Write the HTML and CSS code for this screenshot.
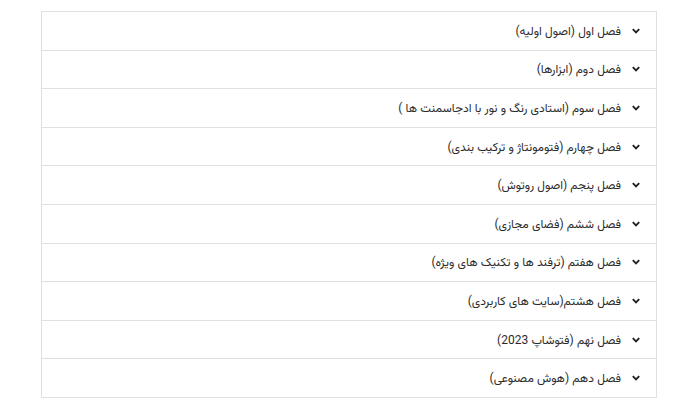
FILE: index.html
```html
<!DOCTYPE html>
<html lang="fa" dir="rtl">
<head>
<meta charset="utf-8">
<link rel="stylesheet" href="styles.css">
</head>
<body>
<ul class="chapters">
  <li class="chapter"><svg class="chev" viewBox="0 0 10 7"><path d="M1 1.2 L5 5.2 L9 1.2" /></svg><span>فصل اول (اصول اولیه)</span></li>
  <li class="chapter"><svg class="chev" viewBox="0 0 10 7"><path d="M1 1.2 L5 5.2 L9 1.2" /></svg><span>فصل دوم (ابزارها)</span></li>
  <li class="chapter"><svg class="chev" viewBox="0 0 10 7"><path d="M1 1.2 L5 5.2 L9 1.2" /></svg><span>فصل سوم (استادی رنگ و نور با ادجاسمنت ها )</span></li>
  <li class="chapter"><svg class="chev" viewBox="0 0 10 7"><path d="M1 1.2 L5 5.2 L9 1.2" /></svg><span>فصل چهارم (فتومونتاژ و ترکیب بندی)</span></li>
  <li class="chapter"><svg class="chev" viewBox="0 0 10 7"><path d="M1 1.2 L5 5.2 L9 1.2" /></svg><span>فصل پنجم (اصول روتوش)</span></li>
  <li class="chapter"><svg class="chev" viewBox="0 0 10 7"><path d="M1 1.2 L5 5.2 L9 1.2" /></svg><span>فصل ششم (فضای مجازی)</span></li>
  <li class="chapter"><svg class="chev" viewBox="0 0 10 7"><path d="M1 1.2 L5 5.2 L9 1.2" /></svg><span>فصل هفتم (ترفند ها و تکنیک های ویژه)</span></li>
  <li class="chapter"><svg class="chev" viewBox="0 0 10 7"><path d="M1 1.2 L5 5.2 L9 1.2" /></svg><span>فصل هشتم(سایت های کاربردی)</span></li>
  <li class="chapter"><svg class="chev" viewBox="0 0 10 7"><path d="M1 1.2 L5 5.2 L9 1.2" /></svg><span>فصل نهم (فتوشاپ 2023)</span></li>
  <li class="chapter"><svg class="chev" viewBox="0 0 10 7"><path d="M1 1.2 L5 5.2 L9 1.2" /></svg><span>فصل دهم (هوش مصنوعی)</span></li>
</ul>
</body>
</html>
```
FILE: styles.css
```css
html, body {
  margin: 0;
  padding: 0;
  background: #fff;
}
body {
  padding: 11px 43px 0 41px;
  font-family: "Vazirmatn", "Noto Sans Arabic", "DejaVu Sans", sans-serif;
}
.chapters {
  list-style: none;
  margin: 0;
  padding: 0;
  border: 1px solid #e0e0e0;
  border-bottom: none;
}
.chapter {
  display: flex;
  align-items: center;
  gap: 11px;
  height: 37.6px;
  padding: 0 16px 0 0;
  border-bottom: 1px solid #e0e0e0;
  color: #2b2b2b;
  font-size: 12px;
}
.chev {
  width: 8px;
  height: 6px;
  flex: none;
  margin-top: 0;
}
.chev path {
  fill: none;
  stroke: #222;
  stroke-width: 2.4;
}
.chapter span {
  padding-top: 2px;
}
```
